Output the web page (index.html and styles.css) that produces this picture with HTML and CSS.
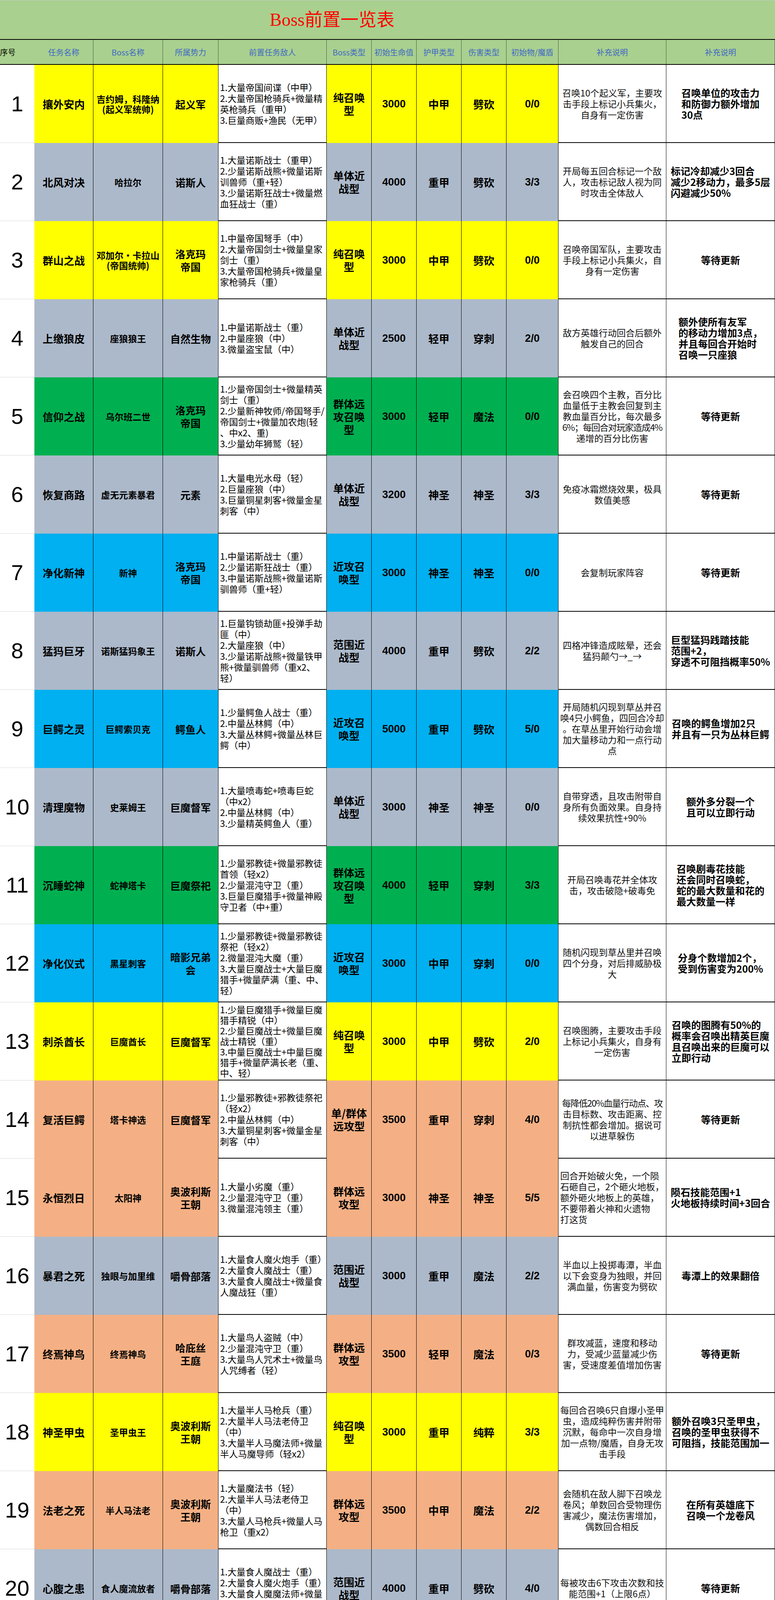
FILE: index.html
```html
<!DOCTYPE html>
<html lang="zh">
<head>
<meta charset="utf-8">
<title>Boss前置一览表</title>
<link rel="stylesheet" href="styles.css">
</head>
<body>
<div class="sheet">
  <div class="title">Boss前置一览表</div>
  <div class="head">
    <div class="hn">序号</div>
    <div>任务名称</div>
    <div>Boss名称</div>
    <div>所属势力</div>
    <div>前置任务敌人</div>
    <div>Boss类型</div>
    <div>初始生命值</div>
    <div>护甲类型</div>
    <div>伤害类型</div>
    <div>初始物/魔盾</div>
    <div>补充说明</div>
    <div>补充说明</div>
  </div>

  <div class="row yellow">
    <div class="n">1</div><div class="f t">攘外安内</div><div class="f b">吉约姆，科隆纳<br>(起义军统帅)</div><div class="f fa">起义军</div>
    <div class="w e">1.大量帝国间谍（中甲）<br>2.大量帝国枪骑兵+微量精<br>英枪骑兵（重甲）<br>3.巨量商贩+渔民（无甲）</div>
    <div class="f ty">纯召唤<br>型</div><div class="f v">3000</div><div class="f v">中甲</div><div class="f v">劈砍</div><div class="f v">0/0</div>
    <div class="w d"><span>召唤10个起义军，主要攻<br>击手段上标记小兵集火，<br>自身有一定伤害</span></div>
    <div class="w x"><span>召唤单位的攻击力<br>和防御力额外增加<br>30点</span></div>
  </div>

  <div class="row gray">
    <div class="n">2</div><div class="f t">北风对决</div><div class="f b">哈拉尔</div><div class="f fa">诺斯人</div>
    <div class="w e">1.大量诺斯战士（重甲）<br>2.少量诺斯战熊+微量诺斯<br>训兽师（重+轻）<br>3.少量诺斯狂战士+微量燃<br>血狂战士（重）</div>
    <div class="f ty">单体近<br>战型</div><div class="f v">4000</div><div class="f v">重甲</div><div class="f v">劈砍</div><div class="f v">3/3</div>
    <div class="w d"><span>开局每五回合标记一个敌<br>人，攻击标记敌人视为同<br>时攻击全体敌人</span></div>
    <div class="w x"><span>标记冷却减少3回合<br>减少2移动力，最多5层<br>闪避减少50%</span></div>
  </div>

  <div class="row yellow">
    <div class="n">3</div><div class="f t">群山之战</div><div class="f b">邓加尔·卡拉山<br>(帝国统帅)</div><div class="f fa">洛克玛<br>帝国</div>
    <div class="w e">1.中量帝国弩手（中）<br>2.大量帝国剑士+微量皇家<br>剑士（重）<br>3.大量帝国枪骑兵+微量皇<br>家枪骑兵（重）</div>
    <div class="f ty">纯召唤<br>型</div><div class="f v">3000</div><div class="f v">中甲</div><div class="f v">劈砍</div><div class="f v">0/0</div>
    <div class="w d"><span>召唤帝国军队，主要攻击<br>手段上标记小兵集火，自<br>身有一定伤害</span></div>
    <div class="w x"><span>等待更新</span></div>
  </div>

  <div class="row gray">
    <div class="n">4</div><div class="f t">上缴狼皮</div><div class="f b">座狼狼王</div><div class="f fa">自然生物</div>
    <div class="w e">1.中量诺斯战士（重）<br>2.中量座狼（中）<br>3.微量盗宝鼠（中）</div>
    <div class="f ty">单体近<br>战型</div><div class="f v">2500</div><div class="f v">轻甲</div><div class="f v">穿刺</div><div class="f v">2/0</div>
    <div class="w d"><span>敌方英雄行动回合后额外<br>触发自己的回合</span></div>
    <div class="w x"><span>额外使所有友军<br>的移动力增加3点，<br>并且每回合开始时<br>召唤一只座狼</span></div>
  </div>

  <div class="row green">
    <div class="n">5</div><div class="f t">信仰之战</div><div class="f b">乌尔班二世</div><div class="f fa">洛克玛<br>帝国</div>
    <div class="w e">1.少量帝国剑士+微量精英<br>剑士（重）<br>2.少量新神牧师/帝国弩手/<br>帝国剑士+微量加农炮(轻<br>、中x2、重)<br>3.少量幼年狮鹫（轻）</div>
    <div class="f ty">群体远<br>攻召唤<br>型</div><div class="f v">3000</div><div class="f v">轻甲</div><div class="f v">魔法</div><div class="f v">0/0</div>
    <div class="w d"><span>会召唤四个主教，百分比<br>血量低于主教会回复到主<br>教血量百分比，每次最多<br><span class="sq">6%；每回合对玩家造成4%</span><br>递增的百分比伤害</span></div>
    <div class="w x"><span>等待更新</span></div>
  </div>

  <div class="row gray">
    <div class="n">6</div><div class="f t">恢复商路</div><div class="f b">虚无元素暴君</div><div class="f fa">元素</div>
    <div class="w e">1.大量电光水母（轻）<br>2.巨量座狼（中）<br>3.巨量铜星刺客+微量金星<br>刺客（中）</div>
    <div class="f ty">单体近<br>战型</div><div class="f v">3200</div><div class="f v">神圣</div><div class="f v">神圣</div><div class="f v">3/3</div>
    <div class="w d"><span>免疫冰霜燃烧效果，极具<br>数值美感</span></div>
    <div class="w x"><span>等待更新</span></div>
  </div>

  <div class="row blue">
    <div class="n">7</div><div class="f t">净化新神</div><div class="f b">新神</div><div class="f fa">洛克玛<br>帝国</div>
    <div class="w e">1.中量诺斯战士（重）<br>2.少量诺斯狂战士（重）<br>3.中量诺斯战熊+微量诺斯<br>驯兽师（重+轻）</div>
    <div class="f ty">近攻召<br>唤型</div><div class="f v">3000</div><div class="f v">神圣</div><div class="f v">神圣</div><div class="f v">0/0</div>
    <div class="w d"><span>会复制玩家阵容</span></div>
    <div class="w x"><span>等待更新</span></div>
  </div>

  <div class="row gray">
    <div class="n">8</div><div class="f t">猛犸巨牙</div><div class="f b">诺斯猛犸象王</div><div class="f fa">诺斯人</div>
    <div class="w e">1.巨量钩锁劫匪+投弹手劫<br>匪（中）<br>2.大量座狼（中）<br>3.少量诺斯战熊+微量铁甲<br>熊+微量驯兽师（重x2、<br>轻）</div>
    <div class="f ty">范围近<br>战型</div><div class="f v">4000</div><div class="f v">重甲</div><div class="f v">劈砍</div><div class="f v">2/2</div>
    <div class="w d"><span>四格冲锋造成眩晕，还会<br>猛犸颠勺→_→</span></div>
    <div class="w x"><span>巨型猛犸践踏技能<br>范围+2，<br>穿透不可阻挡概率50%</span></div>
  </div>

  <div class="row blue">
    <div class="n">9</div><div class="f t">巨鳄之灵</div><div class="f b">巨鳄索贝克</div><div class="f fa">鳄鱼人</div>
    <div class="w e">1.少量鳄鱼人战士（重）<br>2.中量丛林鳄（中）<br>3.大量丛林鳄+微量丛林巨<br>鳄（中）</div>
    <div class="f ty">近攻召<br>唤型</div><div class="f v">5000</div><div class="f v">重甲</div><div class="f v">劈砍</div><div class="f v">5/0</div>
    <div class="w d"><span>开局随机闪现到草丛并召<br>唤4只小鳄鱼，四回合冷却<br>。在草丛里开始行动会增<br>加大量移动力和一点行动<br>点</span></div>
    <div class="w x"><span>召唤的鳄鱼增加2只<br>并且有一只为丛林巨鳄</span></div>
  </div>

  <div class="row gray">
    <div class="n">10</div><div class="f t">清理魔物</div><div class="f b">史莱姆王</div><div class="f fa">巨魔督军</div>
    <div class="w e">1.大量喷毒蛇+喷毒巨蛇<br>（中x2）<br>2.中量丛林鳄（中）<br>3.少量精英鳄鱼人（重）</div>
    <div class="f ty">单体近<br>战型</div><div class="f v">3000</div><div class="f v">神圣</div><div class="f v">神圣</div><div class="f v">0/0</div>
    <div class="w d"><span>自带穿透，且攻击附带自<br>身所有负面效果。自身持<br>续效果抗性+90%</span></div>
    <div class="w x"><span>额外多分裂一个<br>且可以立即行动</span></div>
  </div>

  <div class="row green">
    <div class="n">11</div><div class="f t">沉睡蛇神</div><div class="f b">蛇神塔卡</div><div class="f fa">巨魔祭祀</div>
    <div class="w e">1.少量邪教徒+微量邪教徒<br>首领（轻x2）<br>2.少量混沌守卫（重）<br>3.巨量巨魔猎手+微量神殿<br>守卫者（中+重）</div>
    <div class="f ty">群体远<br>攻召唤<br>型</div><div class="f v">4000</div><div class="f v">轻甲</div><div class="f v">穿刺</div><div class="f v">3/3</div>
    <div class="w d"><span>开局召唤毒花并全体攻<br>击，攻击破隐+破毒免</span></div>
    <div class="w x"><span>召唤剧毒花技能<br>还会同时召唤蛇，<br>蛇的最大数量和花的<br>最大数量一样</span></div>
  </div>

  <div class="row blue">
    <div class="n">12</div><div class="f t">净化仪式</div><div class="f b">黑星刺客</div><div class="f fa">暗影兄弟<br>会</div>
    <div class="w e">1.少量邪教徒+微量邪教徒<br>祭祀（轻x2）<br>2.微量混沌大魔（重）<br>3.大量巨魔战士+大量巨魔<br>猎手+微量萨满（重、中、<br>轻）</div>
    <div class="f ty">近攻召<br>唤型</div><div class="f v">3000</div><div class="f v">中甲</div><div class="f v">穿刺</div><div class="f v">0/0</div>
    <div class="w d"><span>随机闪现到草丛里并召唤<br>四个分身，对后排威胁极<br>大</span></div>
    <div class="w x"><span>分身个数增加2个，<br>受到伤害变为200%</span></div>
  </div>

  <div class="row yellow">
    <div class="n">13</div><div class="f t">刺杀酋长</div><div class="f b">巨魔酋长</div><div class="f fa">巨魔督军</div>
    <div class="w e tight">1.少量巨魔猎手+微量巨魔<br>猎手精锐（中）<br>2.少量巨魔战士+微量巨魔<br>战士精锐（重）<br>3.中量巨魔战士+中量巨魔<br>猎手+微量萨满长老（重、<br>中、轻）</div>
    <div class="f ty">纯召唤<br>型</div><div class="f v">3000</div><div class="f v">中甲</div><div class="f v">劈砍</div><div class="f v">2/0</div>
    <div class="w d"><span>召唤图腾，主要攻击手段<br>上标记小兵集火，自身有<br>一定伤害</span></div>
    <div class="w x"><span>召唤的图腾有50%的<br>概率会召唤出精英巨魔<br>且召唤出来的巨魔可以<br>立即行动</span></div>
  </div>

  <div class="row salmon">
    <div class="n">14</div><div class="f t">复活巨鳄</div><div class="f b">塔卡神选</div><div class="f fa">巨魔督军</div>
    <div class="w e">1.少量邪教徒+邪教徒祭祀<br>（轻x2）<br>2.中量丛林鳄（中）<br>3.大量铜星刺客+微量金星<br>刺客（中）</div>
    <div class="f ty">单/群体<br>远攻型</div><div class="f v">3500</div><div class="f v">重甲</div><div class="f v">穿刺</div><div class="f v">4/0</div>
    <div class="w d"><span><span class="sq">每降低20%血量行动点、攻</span><br>击目标数、攻击距离、控<br>制抗性都会增加。据说可<br>以进草躲伤</span></div>
    <div class="w x"><span>等待更新</span></div>
  </div>

  <div class="row salmon">
    <div class="n">15</div><div class="f t">永恒烈日</div><div class="f b">太阳神</div><div class="f fa">奥波利斯<br>王朝</div>
    <div class="w e">1.大量小劣魔（重）<br>2.少量混沌守卫（重）<br>3.微量混沌领主（重）</div>
    <div class="f ty">群体远<br>攻型</div><div class="f v">3000</div><div class="f v">神圣</div><div class="f v">神圣</div><div class="f v">5/5</div>
    <div class="w d lb"><span>回合开始破火免，一个陨<br>石砸自己，2个砸火地板，<br>额外砸火地板上的英雄，<br>不要带着火神和火遗物<br>打这货</span></div>
    <div class="w x"><span>陨石技能范围+1<br>火地板持续时间+3回合</span></div>
  </div>

  <div class="row gray">
    <div class="n">16</div><div class="f t">暴君之死</div><div class="f b">独眼与加里维</div><div class="f fa">嚼骨部落</div>
    <div class="w e">1.大量食人魔火炮手（重）<br>2.大量食人魔战士（重）<br>3.大量食人魔战士+微量食<br>人魔战狂（重）</div>
    <div class="f ty">范围近<br>战型</div><div class="f v">3000</div><div class="f v">重甲</div><div class="f v">魔法</div><div class="f v">2/2</div>
    <div class="w d"><span>半血以上投掷毒潭，半血<br>以下会变身为独眼，并回<br>满血量，伤害变为劈砍</span></div>
    <div class="w x"><span>毒潭上的效果翻倍</span></div>
  </div>

  <div class="row salmon">
    <div class="n">17</div><div class="f t">终焉神鸟</div><div class="f b">终焉神鸟</div><div class="f fa">哈庇丝<br>王庭</div>
    <div class="w e">1.大量鸟人盗贼（中）<br>2.少量混沌守卫（重）<br>3.大量鸟人咒术士+微量鸟<br>人咒缚者（轻）</div>
    <div class="f ty">群体远<br>攻型</div><div class="f v">3500</div><div class="f v">轻甲</div><div class="f v">魔法</div><div class="f v">0/3</div>
    <div class="w d"><span>群攻减蓝，速度和移动<br>力，受减少蓝量减少伤<br>害，受速度差值增加伤害</span></div>
    <div class="w x"><span>等待更新</span></div>
  </div>

  <div class="row yellow">
    <div class="n">18</div><div class="f t">神圣甲虫</div><div class="f b">圣甲虫王</div><div class="f fa">奥波利斯<br>王朝</div>
    <div class="w e">1.大量半人马枪兵（重）<br>2.大量半人马法老侍卫<br>（中）<br>3.大量半人马魔法师+微量<br>半人马魔导师（轻x2）</div>
    <div class="f ty">纯召唤<br>型</div><div class="f v">3000</div><div class="f v">重甲</div><div class="f v">纯粹</div><div class="f v">3/3</div>
    <div class="w d"><span>每回合召唤6只自爆小圣甲<br>虫，造成纯粹伤害并附带<br>沉默，每命中一次自身增<br>加一点物/魔盾，自身无攻<br>击手段</span></div>
    <div class="w x"><span>额外召唤3只圣甲虫，<br>召唤的圣甲虫获得不<br>可阻挡，技能范围加一</span></div>
  </div>

  <div class="row salmon">
    <div class="n">19</div><div class="f t">法老之死</div><div class="f b">半人马法老</div><div class="f fa">奥波利斯<br>王朝</div>
    <div class="w e">1.大量魔法书（轻）<br>2.大量半人马法老侍卫<br>（中）<br>3.大量人马枪兵+微量人马<br>枪卫（重x2）</div>
    <div class="f ty">群体远<br>攻型</div><div class="f v">3500</div><div class="f v">中甲</div><div class="f v">魔法</div><div class="f v">2/2</div>
    <div class="w d"><span>会随机在敌人脚下召唤龙<br>卷风；单数回合受物理伤<br>害减少，魔法伤害增加，<br>偶数回合相反</span></div>
    <div class="w x"><span>在所有英雄底下<br>召唤一个龙卷风</span></div>
  </div>

  <div class="row gray">
    <div class="n">20</div><div class="f t">心腹之患</div><div class="f b">食人魔流放者</div><div class="f fa">嚼骨部落</div>
    <div class="w e">1.大量食人魔战士（重）<br>2.大量食人魔火炮手（重）<br>3.大量食人魔魔法师+微量<br>食人魔魔导师（重）</div>
    <div class="f ty">范围近<br>战型</div><div class="f v">4000</div><div class="f v">重甲</div><div class="f v">劈砍</div><div class="f v">4/0</div>
    <div class="w d"><span>每被攻击6下攻击次数和技<br>能范围+1（上限6点）</span></div>
    <div class="w x"><span>等待更新</span></div>
  </div>

  <div class="row salmon">
    <div class="n">21</div><div class="f t">药水商</div><div class="f b">受诅女巫</div><div class="f fa">自然生物</div>
    <div class="w e ind">药水商抢劫</div>
    <div class="f ty">单体远<br>攻型</div><div class="f v">2500</div><div class="f v">轻甲</div><div class="f v">魔法</div><div class="f v">2/4</div>
    <div class="w d"><span>随机使用4个药水，两回合<br>冷却</span></div>
    <div class="w x"><span>未调整</span></div>
  </div>

  <div class="row gray">
    <div class="n">22</div><div class="f t">遗物商</div><div class="f b">神秘的卡佛</div><div class="f fa">自然生物</div>
    <div class="w e ind">遗物商抢劫</div>
    <div class="f ty">单体近<br>战型</div><div class="f v">2500</div><div class="f v">中甲</div><div class="f v">穿刺</div><div class="f v">4/2</div>
    <div class="w d"><span>每回合获得一个遗物</span></div>
    <div class="w x"><span>未调整</span></div>
  </div>

  <div class="row yellow">
    <div class="n">23</div><div class="f t">奴隶商</div><div class="f b">猫猫奴隶商</div><div class="f fa">自然生物</div>
    <div class="w e ind">奴隶商抢劫</div>
    <div class="f ty">纯召唤<br>型</div><div class="f v">2500</div><div class="f v">神圣</div><div class="f v">神圣</div><div class="f v">3/3</div>
    <div class="w d"><span>召唤三个奴隶并强化友方<br>单位，自身无攻击手段</span></div>
    <div class="w x"><span>未调整</span></div>
  </div>

  <div class="row gray short">
    <div class="n">24</div><div class="f t">兰斯特</div><div class="f b">兰斯特·斯图亚特</div><div class="f fa">自然生物</div>
    <div class="w e ind">拿走白鸦剑典</div>
    <div class="f ty">单体近<br>战型</div><div class="f v">1800</div><div class="f v">神圣</div><div class="f v">神圣</div><div class="f v">5/5</div>
    <div class="w d"><span>多动，狼王plus版</span></div>
    <div class="w x"><span>未调整</span></div>
  </div>

  <div class="row gray last">
    <div class="n">25</div><div class="f t">失控机甲</div><div class="f b">战争机甲</div><div class="f fa">黑金财阀</div>
    <div class="w e">1.巨量钩锁劫匪+投弹手劫<br>匪(无护甲)<br>2.巨量黑金伐木工（轻）<br>+少量黑金伐木机（重）<br>3.大量幼年狮鹫（轻）+少<br>量狮鹫（轻）</div>
    <div class="f ty lt">范围近战<br>范围远程<br>型</div><div class="f v">4000</div><div class="f v">重甲</div><div class="f v">穿刺</div><div class="f v">4/0</div>
    <div class="w d lb"><span>周围群体击退4格和<br>攻击4格及外所有敌人</span></div>
    <div class="w x"><span>等待更新</span></div>
  </div>

  <div class="foot">
    <p class="ps">PS：文中设定2为微量，4为少量，6为中量，8为大量，&gt;=10为巨量。可能有不太准备的地方，仅作参考用，随着难度增加怪物数也会增加<br>100层后boss有增加强化技能，目前已知有黑星增加召唤分身数量，蛇神增加召唤小蛇，甲虫增加召唤小蛇，狼王增加召唤小狼，<br>太阳神增加火焰持续时间，具体等之后更新</p>
    <div class="ghost" aria-hidden="true"><p class="ps ps-ghost">PS：文中设定2为微量，4为少量，6为中量，8为大量，&gt;=10为巨量。可能有不太准备的地方，仅作参考用，随着难度增加怪物数也会增加<br>100层后boss有增加强化技能，目前已知有黑星增加召唤分身数量，蛇神增加召唤小蛇，甲虫增加召唤小蛇，狼王增加召唤小狼，<br>太阳神增加火焰持续时间，具体等之后更新</p></div>
  </div>
</div>
</body>
</html>
```

FILE: styles.css
```css
html, body {
  margin: 0;
  padding: 0;
  background: #fff;
}

body {
  width: 1983px;
  font-family: "Noto Sans CJK SC", "Liberation Sans", sans-serif;
  color: #000;
}

.sheet {
  width: 1983px;
}

.title {
  height: 100px;
  box-sizing: border-box;
  background: #a9d08e;
  border-top: 1px solid #c6c6c6;
  display: flex;
  align-items: center;
  padding-left: 690px;
  color: #ff0000;
  font-family: "Liberation Serif", "Noto Sans CJK SC", serif;
  font-size: 46px;
  line-height: 1;
}

.head,
.row {
  display: grid;
  grid-template-columns: 88px 151px 178px 142px 277px 115px 115px 115px 115px 133px 276px 278px;
}

.head {
  height: 66px;
  box-sizing: border-box;
  background: #a9d08e;
  border-top: 2px solid #000;
  border-bottom: 2px solid #000;
}

.head > div {
  display: flex;
  align-items: center;
  justify-content: center;
  box-sizing: border-box;
  border-right: 1px solid #4d5a44;
  color: #3f68c6;
  font-size: 20px;
  white-space: nowrap;
  overflow: hidden;
}

.head > .hn {
  justify-content: flex-start;
  color: #000;
  border-right: none;
}

.row {
  height: 200px;
}

.row.short {
  height: 187px;
}

.row > div {
  box-sizing: border-box;
  border-right: 1px solid #000;
  display: flex;
  align-items: center;
  justify-content: center;
  text-align: center;
  overflow: hidden;
}

.row > .n {
  border-right: none;
  border-bottom: 1px solid #d9d9d9;
  font-family: "Liberation Sans", sans-serif;
  font-size: 56px;
  line-height: 1;
  font-weight: normal;
}

.row > .w {
  background: #fff;
  border-bottom: 2px solid #000;
}

.yellow > .f { background: #ffff00; }
.gray > .f { background: #acb9ca; }
.green > .f { background: #00b050; }
.blue > .f { background: #00b0f0; }
.salmon > .f { background: #f4b084; }

.last > .f {
  border-bottom: 3px solid #00b0f0;
}

.t {
  font-size: 27px;
  font-weight: bold;
  white-space: nowrap;
}

.b {
  font-size: 23px;
  line-height: 26px;
  font-weight: bold;
  white-space: nowrap;
}

.fa {
  font-size: 26px;
  line-height: 33px;
  font-weight: bold;
  white-space: nowrap;
}

.row > .e {
  justify-content: flex-start;
  text-align: left;
  padding-left: 4px;
  font-size: 23px;
  line-height: 28px;
  white-space: nowrap;
}

.row > .e.tight {
  line-height: 27px;
}

.row > .e.ind {
  padding-left: 16px;
}

.ty {
  font-size: 27px;
  line-height: 33px;
  font-weight: bold;
  white-space: nowrap;
}

.row > .ty.lt {
  justify-content: flex-start;
  text-align: left;
  padding-left: 12px;
  font-size: 23px;
  line-height: 28px;
}

.v {
  font-family: "Liberation Sans", "Noto Sans CJK SC", sans-serif;
  font-size: 27px;
  font-weight: bold;
  white-space: nowrap;
}

.d {
  font-size: 23px;
  line-height: 28px;
  color: #111;
  white-space: nowrap;
}

.d > span,
.x > span {
  display: inline-block;
}

.d .sq {
  letter-spacing: -1.5px;
}

.d.lb > span {
  text-align: left;
}

.x {
  font-size: 25px;
  line-height: 28px;
  font-weight: bold;
  white-space: nowrap;
}

.x > span {
  text-align: left;
}

.foot {
  position: relative;
  height: 146px;
  overflow: hidden;
}

.ps {
  margin: 0;
  padding: 30px 0 0 120px;
  font-size: 23.4px;
  line-height: 28px;
  color: #262626;
  white-space: nowrap;
}

.ghost {
  position: absolute;
  left: 1705px;
  top: 0;
  width: 278px;
  height: 100%;
  overflow: hidden;
}

.ps-ghost {
  position: absolute;
  left: -1309px;
  top: 0;
  padding-left: 0;
}
```
